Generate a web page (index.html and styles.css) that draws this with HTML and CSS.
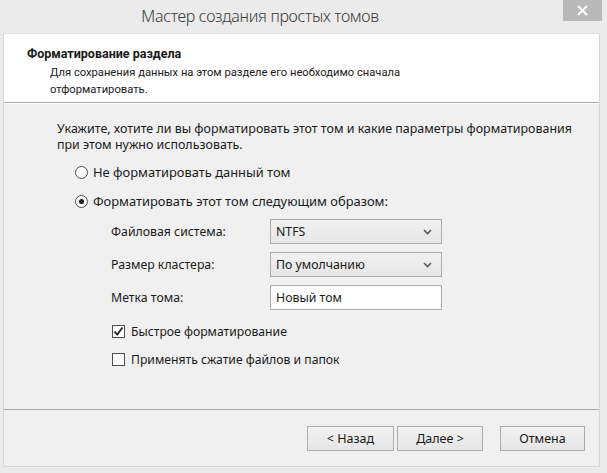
FILE: index.html
```html
<!DOCTYPE html>
<html lang="ru">

<head>
    <meta charset="utf-8">
    <title>Мастер создания простых томов</title>
    <link rel="stylesheet" href="styles.css">
</head>

<body>
    <div class="window">
        <div class="titlebar">
            <span class="caption">Мастер создания простых томов</span>
            <div class="close">
                <svg width="11" height="11" viewBox="0 0 11 11">
                    <path d="M1 1 L10 10 M10 1 L1 10" stroke="#fff" stroke-width="2" />
                </svg>
            </div>
        </div>

        <div class="client">
            <!-- wizard page header -->
            <div class="head">
                <div class="head-title">Форматирование раздела</div>
                <div class="head-sub">Для сохранения данных на этом разделе его необходимо сначала<br>отформатировать.</div>
            </div>

            <div class="page">
                <div class="intro">Укажите, хотите ли вы форматировать этот том и какие параметры форматирования<br>при этом нужно использовать.</div>

                <div class="opt radio-row first">
                    <span class="radio"></span>
                    <span>Не форматировать данный том</span>
                </div>
                <div class="opt radio-row">
                    <span class="radio checked"></span>
                    <span>Форматировать этот том следующим образом:</span>
                </div>

                <div class="fields">
                    <div class="lbl">Файловая система:</div>
                    <div class="combo">
                        <span>NTFS</span>
                        <svg width="9" height="6" viewBox="0 0 9 6"><path d="M1 1 L4.5 4.5 L8 1" fill="none" stroke="#555" stroke-width="1.6" /></svg>
                    </div>
                    <div class="lbl">Размер кластера:</div>
                    <div class="combo">
                        <span>По умолчанию</span>
                        <svg width="9" height="6" viewBox="0 0 9 6"><path d="M1 1 L4.5 4.5 L8 1" fill="none" stroke="#555" stroke-width="1.6" /></svg>
                    </div>
                    <div class="lbl">Метка тома:</div>
                    <div class="edit">Новый том</div>
                </div>

                <div class="opt check-row first">
                    <span class="check on">
                        <svg width="11" height="11" viewBox="0 0 11 11"><path d="M1.5 5.5 L4.2 8.5 L9.5 1.5" fill="none" stroke="#222" stroke-width="1.8" /></svg>
                    </span>
                    <span>Быстрое форматирование</span>
                </div>
                <div class="opt check-row">
                    <span class="check"></span>
                    <span>Применять сжатие файлов и папок</span>
                </div>
            </div>

            <div class="foot">
                <div class="btn">&lt; Назад</div>
                <div class="btn next">Далее &gt;</div>
                <div class="btn cancel">Отмена</div>
            </div>
        </div>
    </div>
</body>

</html>
```

FILE: styles.css
```css
body {
    margin: 0;
    background: #ebebeb;
    font-family: "Noto Sans", "Liberation Sans", sans-serif;
    font-size: 12px;
    color: #1a1a1a;
}

.window {
    width: 607px;
    height: 473px;
    overflow: hidden;
}

.titlebar {
    position: relative;
    height: 33px;
    display: flex;
    justify-content: center;
    align-items: center;
}

.caption {
    font-size: 16px;
    font-weight: 300;
    letter-spacing: -0.3px;
    color: #3a3a3a;
    margin-left: -87px;
    margin-top: -2px;
}

.close {
    position: absolute;
    top: 0;
    right: 5px;
    width: 39px;
    height: 21px;
    background: #b8b8b8;
    display: flex;
    justify-content: center;
    align-items: center;
}

.client {
    margin: 0 7px 0 3px;
    height: 433px;
    border-left: 1px solid #d6d6d6;
    border-right: 1px solid #d6d6d6;
    border-bottom: 1px solid #d6d6d6;
    background: #f0f0f0;
}

.head {
    height: 70px;
    background: #fff;
    border-top: 1px solid #dedede;
    border-bottom: 1px solid #a9a9a9;
    box-sizing: border-box;
    padding: 11px 0 0 23px;
    font-family: Roboto, "Noto Sans", sans-serif;
}

.head-title {
    font-weight: bold;
    font-size: 12.5px;
    line-height: 17px;
}

.head-sub {
    margin: 2px 0 0 23px;
    font-size: 11.2px;
    line-height: 17px;
}

.page {
    height: 306px;
    box-sizing: border-box;
    padding: 17px 0 0 53px;
    border-top: 1px solid #fff;
}

.intro {
    font-size: 12.45px;
    line-height: 16px;
}

.opt {
    display: flex;
    align-items: center;
    height: 22px;
}

.radio-row {
    margin: 7px 0 0 18px;
    font-size: 12.9px;
}

.radio-row.first {
    margin-top: 8px;
}

.radio {
    width: 11px;
    height: 11px;
    border: 1px solid #4d4d4d;
    border-radius: 50%;
    background: #fff;
    margin-right: 5px;
    display: flex;
    justify-content: center;
    align-items: center;
}

.radio.checked::after {
    content: "";
    width: 5px;
    height: 5px;
    border-radius: 50%;
    background: #1a1a1a;
}

.fields {
    display: grid;
    grid-template-columns: 159px 172px;
    grid-auto-rows: 25px;
    row-gap: 8px;
    margin: 7px 0 0 54px;
    align-items: center;
    font-size: 12.3px;
}

.combo,
.edit {
    height: 25px;
    box-sizing: border-box;
    display: flex;
    align-items: center;
    padding: 0 9px 0 5px;
}

.combo {
    justify-content: space-between;
    border: 1px solid #acacac;
    background: linear-gradient(#f2f2f2, #e6e6e6);
}

.edit {
    border: 1px solid #abadb3;
    background: #fff;
}

.check-row {
    margin: 6px 0 0 55px;
    font-size: 12.2px;
}

.check-row.first {
    margin-top: 10px;
}

.check {
    width: 11px;
    height: 11px;
    border: 1px solid #4d4d4d;
    background: #fff;
    margin-right: 6px;
    display: flex;
    justify-content: center;
    align-items: center;
}

.foot {
    border-top: 1px solid #a9a9a9;
    display: flex;
    justify-content: flex-end;
    padding: 16px 14px 0 0;
    font-size: 12.5px;
}

.btn {
    height: 25px;
    width: 87px;
    box-sizing: border-box;
    border: 1px solid #adadad;
    background: linear-gradient(#f2f2f2, #e5e5e5);
    display: flex;
    justify-content: center;
    align-items: center;
}

.btn.next {
    width: 86px;
    margin-left: 3px;
}

.btn.cancel {
    width: 85px;
    margin-left: 17px;
}
```
